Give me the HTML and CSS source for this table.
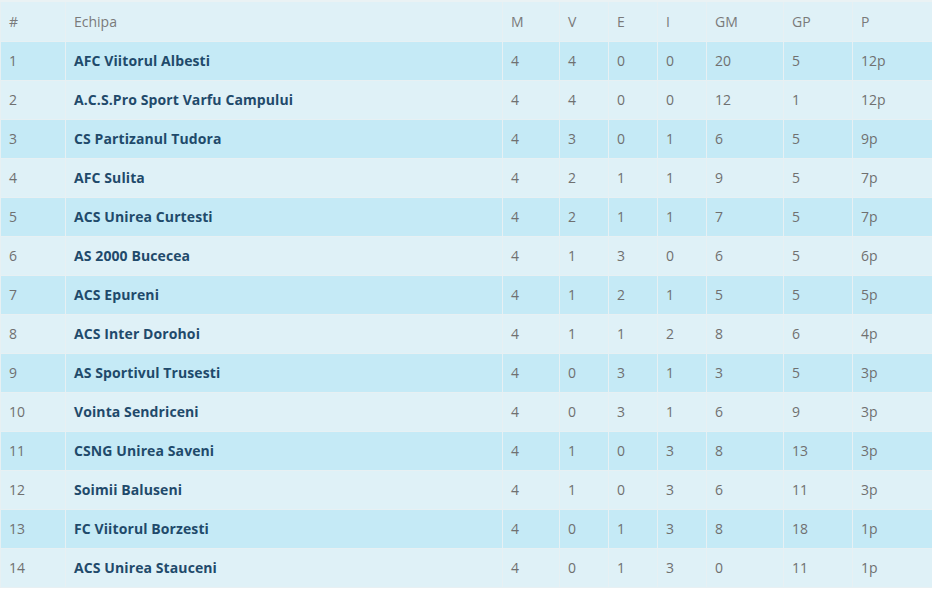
FILE: index.html
```html
<!DOCTYPE html>
<html>
<head>
<meta charset="utf-8">
<link rel="stylesheet" href="styles.css">
</head>
<body>
<table class="standings">
<colgroup>
<col class="c-pos"><col class="c-team"><col class="c-m"><col class="c-v"><col class="c-e"><col class="c-i"><col class="c-gm"><col class="c-gp"><col class="c-p">
</colgroup>
<thead>
<tr><th>#</th><th>Echipa</th><th>M</th><th>V</th><th>E</th><th>I</th><th>GM</th><th>GP</th><th>P</th></tr>
</thead>
<tbody>
<tr><td>1</td><td class="team">AFC Viitorul Albesti</td><td>4</td><td>4</td><td>0</td><td>0</td><td>20</td><td>5</td><td>12p</td></tr>
<tr><td>2</td><td class="team">A.C.S.Pro Sport Varfu Campului</td><td>4</td><td>4</td><td>0</td><td>0</td><td>12</td><td>1</td><td>12p</td></tr>
<tr><td>3</td><td class="team">CS Partizanul Tudora</td><td>4</td><td>3</td><td>0</td><td>1</td><td>6</td><td>5</td><td>9p</td></tr>
<tr><td>4</td><td class="team">AFC Sulita</td><td>4</td><td>2</td><td>1</td><td>1</td><td>9</td><td>5</td><td>7p</td></tr>
<tr><td>5</td><td class="team">ACS Unirea Curtesti</td><td>4</td><td>2</td><td>1</td><td>1</td><td>7</td><td>5</td><td>7p</td></tr>
<tr><td>6</td><td class="team">AS 2000 Bucecea</td><td>4</td><td>1</td><td>3</td><td>0</td><td>6</td><td>5</td><td>6p</td></tr>
<tr><td>7</td><td class="team">ACS Epureni</td><td>4</td><td>1</td><td>2</td><td>1</td><td>5</td><td>5</td><td>5p</td></tr>
<tr><td>8</td><td class="team">ACS Inter Dorohoi</td><td>4</td><td>1</td><td>1</td><td>2</td><td>8</td><td>6</td><td>4p</td></tr>
<tr><td>9</td><td class="team">AS Sportivul Trusesti</td><td>4</td><td>0</td><td>3</td><td>1</td><td>3</td><td>5</td><td>3p</td></tr>
<tr><td>10</td><td class="team">Vointa Sendriceni</td><td>4</td><td>0</td><td>3</td><td>1</td><td>6</td><td>9</td><td>3p</td></tr>
<tr><td>11</td><td class="team">CSNG Unirea Saveni</td><td>4</td><td>1</td><td>0</td><td>3</td><td>8</td><td>13</td><td>3p</td></tr>
<tr><td>12</td><td class="team">Soimii Baluseni</td><td>4</td><td>1</td><td>0</td><td>3</td><td>6</td><td>11</td><td>3p</td></tr>
<tr><td>13</td><td class="team">FC Viitorul Borzesti</td><td>4</td><td>0</td><td>1</td><td>3</td><td>8</td><td>18</td><td>1p</td></tr>
<tr><td>14</td><td class="team">ACS Unirea Stauceni</td><td>4</td><td>0</td><td>1</td><td>3</td><td>0</td><td>11</td><td>1p</td></tr>
</tbody>
</table>
</body>
</html>
```

FILE: styles.css
```css
html, body {
  margin: 0;
  padding: 0;
  background: #ffffff;
}
.standings {
  width: 932px;
  border-collapse: collapse;
  table-layout: fixed;
  font-family: "Open Sans", "DejaVu Sans", sans-serif;
  font-size: 14px;
  color: #707070;
}
.c-pos { width: 65px; }
.c-team { width: 437px; }
.c-m { width: 57px; }
.c-v { width: 49px; }
.c-e { width: 49px; }
.c-i { width: 49px; }
.c-gm { width: 77px; }
.c-gp { width: 69px; }
.c-p { width: 80px; }
.standings th,
.standings td {
  border: 1px solid #e7f0f3;
  text-align: left;
  padding: 9px 8px 9px 8px;
  line-height: 20px;
  font-weight: normal;
  white-space: nowrap;
  overflow: hidden;
}
.standings th {
  background: #dff1f7;
  color: #7a7a7a;
  padding-top: 10px;
  padding-bottom: 9px;
  border-top: 2px solid #eaf2f4;
}
.standings tbody tr:nth-child(odd) td {
  background: #c5eaf6;
}
.standings tbody tr:nth-child(even) td {
  background: #dff1f7;
}
.standings td.team {
  font-weight: 700;
  color: #1f4a6b;
  letter-spacing: 0.1px;
}
```
